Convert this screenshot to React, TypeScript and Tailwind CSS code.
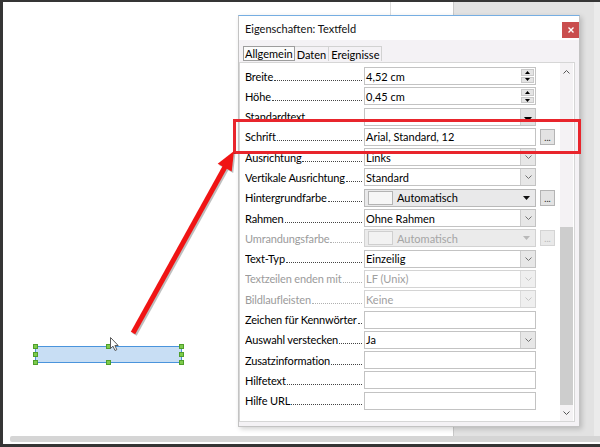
import React from "react";

type Kind = "spin" | "text" | "combo" | "drop" | "color";
type Row = { label: string; kind: Kind; value?: string; extra?: boolean; disabled?: boolean };

const rows: Row[] = [
  { label: "Breite", kind: "spin", value: "4,52 cm" },
  { label: "Höhe", kind: "spin", value: "0,45 cm" },
  { label: "Standardtext", kind: "drop", value: "" },
  { label: "Schrift", kind: "text", value: "Arial, Standard, 12", extra: true },
  { label: "Ausrichtung", kind: "combo", value: "Links" },
  { label: "Vertikale Ausrichtung", kind: "combo", value: "Standard" },
  { label: "Hintergrundfarbe", kind: "color", value: "Automatisch", extra: true },
  { label: "Rahmen", kind: "combo", value: "Ohne Rahmen" },
  { label: "Umrandungsfarbe", kind: "color", value: "Automatisch", extra: true, disabled: true },
  { label: "Text-Typ", kind: "combo", value: "Einzeilig" },
  { label: "Textzeilen enden mit", kind: "combo", value: "LF (Unix)", disabled: true },
  { label: "Bildlaufleisten", kind: "combo", value: "Keine", disabled: true },
  { label: "Zeichen für Kennwörter", kind: "text", value: "" },
  { label: "Auswahl verstecken", kind: "combo", value: "Ja" },
  { label: "Zusatzinformation", kind: "text" },
  { label: "Hilfetext", kind: "text" },
  { label: "Hilfe URL", kind: "text" },
];

function Chevron({ color = "#6b6b6b", up = false }: { color?: string; up?: boolean }) {
  return (
    <svg width="7" height="4" viewBox="0 0 7 4" className="block">
      <path
        d={up ? "M0.5 3.5 L3.5 0.5 L6.5 3.5" : "M0.5 0.5 L3.5 3.5 L6.5 0.5"}
        fill="none"
        stroke={color}
        strokeWidth="1"
      />
    </svg>
  );
}

function Tri({ color = "#000", w = 7, h = 4, up = false }: { color?: string; w?: number; h?: number; up?: boolean }) {
  return (
    <svg width={w} height={h} viewBox={`0 0 ${w} ${h}`} className="block">
      <path d={up ? `M0 ${h} L${w} ${h} L${w / 2} 0 Z` : `M0 0 L${w} 0 L${w / 2} ${h} Z`} fill={color} />
    </svg>
  );
}

function Label({ text, disabled }: { text: string; disabled?: boolean }) {
  return (
    <div
      className={`w-[119px] shrink-0 flex items-baseline pr-[2px] overflow-hidden ${
        disabled ? "text-[#9b9b9b]" : "text-black"
      }`}
    >
      <span className="whitespace-nowrap tracking-[-0.15px]">{text}</span>
      <span
        className={`flex-1 min-w-[3px] h-0 ml-px border-b border-dotted ${
          disabled ? "border-[#b0b0b0]" : "border-[#444]"
        }`}
      />
    </div>
  );
}

function Field({ row }: { row: Row }) {
  const dis = row.disabled;
  if (row.kind === "color") {
    return (
      <div
        className={`w-[172px] h-[18px] border flex items-center pl-[3px] ${
          dis ? "bg-[#ebebeb] border-[#d2d2d2] text-[#a5a5a5]" : "bg-[#e9e9ea] border-[#b9b9b9] text-black"
        }`}
      >
        <div
          className={`w-[25px] h-[14px] border ${dis ? "border-[#cfcfcf] bg-[#f2f2f2]" : "border-[#b3b3b3] bg-[#f6f6f6]"}`}
        />
        <span className="ml-[4px] whitespace-nowrap">{row.value}</span>
        <div className="ml-auto mr-[5px]">
          <Tri color={dis ? "#b9b9b9" : "#111"} />
        </div>
      </div>
    );
  }
  return (
    <div
      className={`w-[172px] h-[18px] border bg-white flex items-center pl-px ${
        dis ? "border-[#d4d4d4] text-[#a0a0a0]" : "border-[#c3c3c3] text-black"
      }`}
    >
      <span className="whitespace-nowrap">{row.value}</span>
      {row.kind === "spin" && (
        <div className="ml-auto h-full w-[15px] flex flex-col gap-px p-px">
          <div className="flex-1 bg-[#e4e4e4] border border-[#c9c9c9] flex items-center justify-center">
            <Tri w={5} h={3} up />
          </div>
          <div className="flex-1 bg-[#e4e4e4] border border-[#c9c9c9] flex items-center justify-center">
            <Tri w={5} h={3} />
          </div>
        </div>
      )}
      {row.kind === "drop" && (
        <div className="ml-auto h-full w-[15px] bg-[#e2e2e2] border-l border-[#cdcdcd] flex items-end justify-center pb-[3px]">
          <Tri w={8} h={5} />
        </div>
      )}
      {row.kind === "combo" && (
        <div
          className={`ml-auto h-full w-[15px] border-l flex items-center justify-center ${
            dis ? "bg-[#efefef] border-[#dcdcdc]" : "bg-[#e7e7e7] border-[#cdcdcd]"
          }`}
        >
          <Chevron color={dis ? "#c4c4c4" : "#707070"} />
        </div>
      )}
    </div>
  );
}

function DotsButton({ disabled }: { disabled?: boolean }) {
  return (
    <div
      className={`w-[15px] h-[16px] border flex items-end justify-center pb-[2px] leading-none text-[9px] ${
        disabled ? "bg-[#e9e9e9] border-[#d4d4d4] text-[#b5b5b5]" : "bg-[#e3e3e3] border-[#b4b4b4] text-[#222]"
      }`}
    >
      ...
    </div>
  );
}

function Handle({ x, y }: { x: number; y: number }) {
  return (
    <div
      className="absolute w-[5px] h-[5px] bg-[#7dcb4c] border border-[#4f9e2b]"
      style={{ left: x - 2, top: y - 2 }}
    />
  );
}

export default function App() {
  return (
    <div className="relative w-[600px] h-[447px] overflow-hidden bg-white font-['Lato',sans-serif] text-[11px] leading-[13px]">
      {/* page frame */}
      <div className="w-full h-full border-t-2 border-l-[3px] border-b-[3px] border-[#353535] flex flex-col">
        <div className="flex-1 flex">
          <div className="w-[450px] bg-white" />
          <div className="flex-1 flex bg-[#e2e2e2] border-l border-[#c9c9c9]">
            <div className="flex-1" />
            <div className="w-[6px] bg-[#ebebeb]" />
          </div>
        </div>
        <div className="h-[6px] flex">
          <div className="w-[7px] bg-white" />
          <div className="flex-1 bg-[#d5d5d5] rounded-l-[2px]" />
        </div>
        <div className="h-[2px] bg-white" />
      </div>

      {/* ruler line above dialog */}
      <div className="absolute left-[390px] top-[2px] w-px h-[13px] bg-[#dcdcdc]" />

      {/* text field on canvas */}
      <div className="absolute left-[35px] top-[346px] w-[147px] h-[17px] bg-[#c8def4] border border-[#4a94dc]" />
      <Handle x={35} y={346} />
      <Handle x={35} y={354} />
      <Handle x={35} y={362} />
      <Handle x={108} y={346} />
      <Handle x={108} y={362} />
      <Handle x={181} y={346} />
      <Handle x={181} y={354} />
      <Handle x={181} y={362} />

      {/* cursor */}
      <svg className="absolute left-[110px] top-[337px]" width="10" height="15" viewBox="0 0 10 15">
        <path
          d="M0.5 0.5 L0.5 11.5 L3 9.2 L5 13.5 L6.8 12.7 L4.9 8.5 L8.2 8.5 Z"
          fill="white"
          stroke="#5a5a5a"
          strokeWidth="1"
        />
      </svg>

      {/* dialog */}
      <div className="absolute left-[238px] top-[15px] w-[342px] h-[412px] bg-[#f4f2f5] border border-[#c3c3c3] border-t-[#76aee2] shadow-[2px_2px_5px_rgba(0,0,0,0.18)] flex flex-col text-black">
        <div className="h-[24px] bg-white flex items-start">
          <span className="mt-[6px] ml-[6px] leading-[14px] text-[#111]">Eigenschaften: Textfeld</span>
          <div className="ml-auto mt-[6px] w-[17px] h-[16px] bg-[#c94d4d] flex items-center justify-center">
            <svg width="6" height="6" viewBox="0 0 6 6">
              <path d="M0.5 0.5 L5.5 5.5 M5.5 0.5 L0.5 5.5" stroke="white" strokeWidth="1.4" />
            </svg>
          </div>
        </div>
        <div className="h-[22px] pt-[6px] pl-[4px] flex items-start">
          <div className="h-[15px] px-px border border-[#9d9d9d] bg-[#fbfbfb] flex items-center">Allgemein</div>
          <div className="h-[15px] px-[2px] border-t border-r border-[#d2d2d2] flex items-center">Daten</div>
          <div className="h-[15px] px-[2px] border-t border-r border-[#d2d2d2] flex items-center">Ereignisse</div>
        </div>
        <div className="h-[360px] mr-[4px] bg-white border border-[#d6d6d6] flex">
          <div className="flex-1 pl-[5px] pt-[4px] flex flex-col gap-[2.3px]">
            {rows.map((r) => (
              <div key={r.label} className="h-[18px] flex items-center">
                <Label text={r.label} disabled={r.disabled} />
                <Field row={r} />
                {r.extra && (
                  <div className="ml-[4px]">
                    <DotsButton disabled={r.disabled} />
                  </div>
                )}
              </div>
            ))}
          </div>
          <div className="w-[13px] mr-px bg-[#f4f2f4] flex flex-col">
            <div className="h-[18px] flex items-center justify-center">
              <Chevron up color="#555" />
            </div>
            <div className="h-[146px]" />
            <div className="flex-1 bg-[#cdcdcd]" />
            <div className="h-[16px] flex items-center justify-center">
              <Chevron color="#555" />
            </div>
          </div>
        </div>
      </div>

      {/* red highlight box */}
      <div className="absolute left-[233px] top-[119px] w-[348px] h-[35px] border-[3px] border-[#e8252c]" />

      {/* red arrow */}
      <svg className="absolute left-0 top-0" width="600" height="447" viewBox="0 0 600 447">
        <g opacity="0.25" transform="translate(1.5,1.5)">
          <line x1="133" y1="333" x2="225.5" y2="166" stroke="#000" strokeWidth="5" />
          <polygon points="234,151 231.7,171.5 217.7,163.7" fill="#000" />
        </g>
        <line x1="133" y1="333" x2="225.5" y2="166" stroke="#f01414" strokeWidth="5" />
        <polygon points="234,151 231.7,171.5 217.7,163.7" fill="#f01414" />
      </svg>
    </div>
  );
}
